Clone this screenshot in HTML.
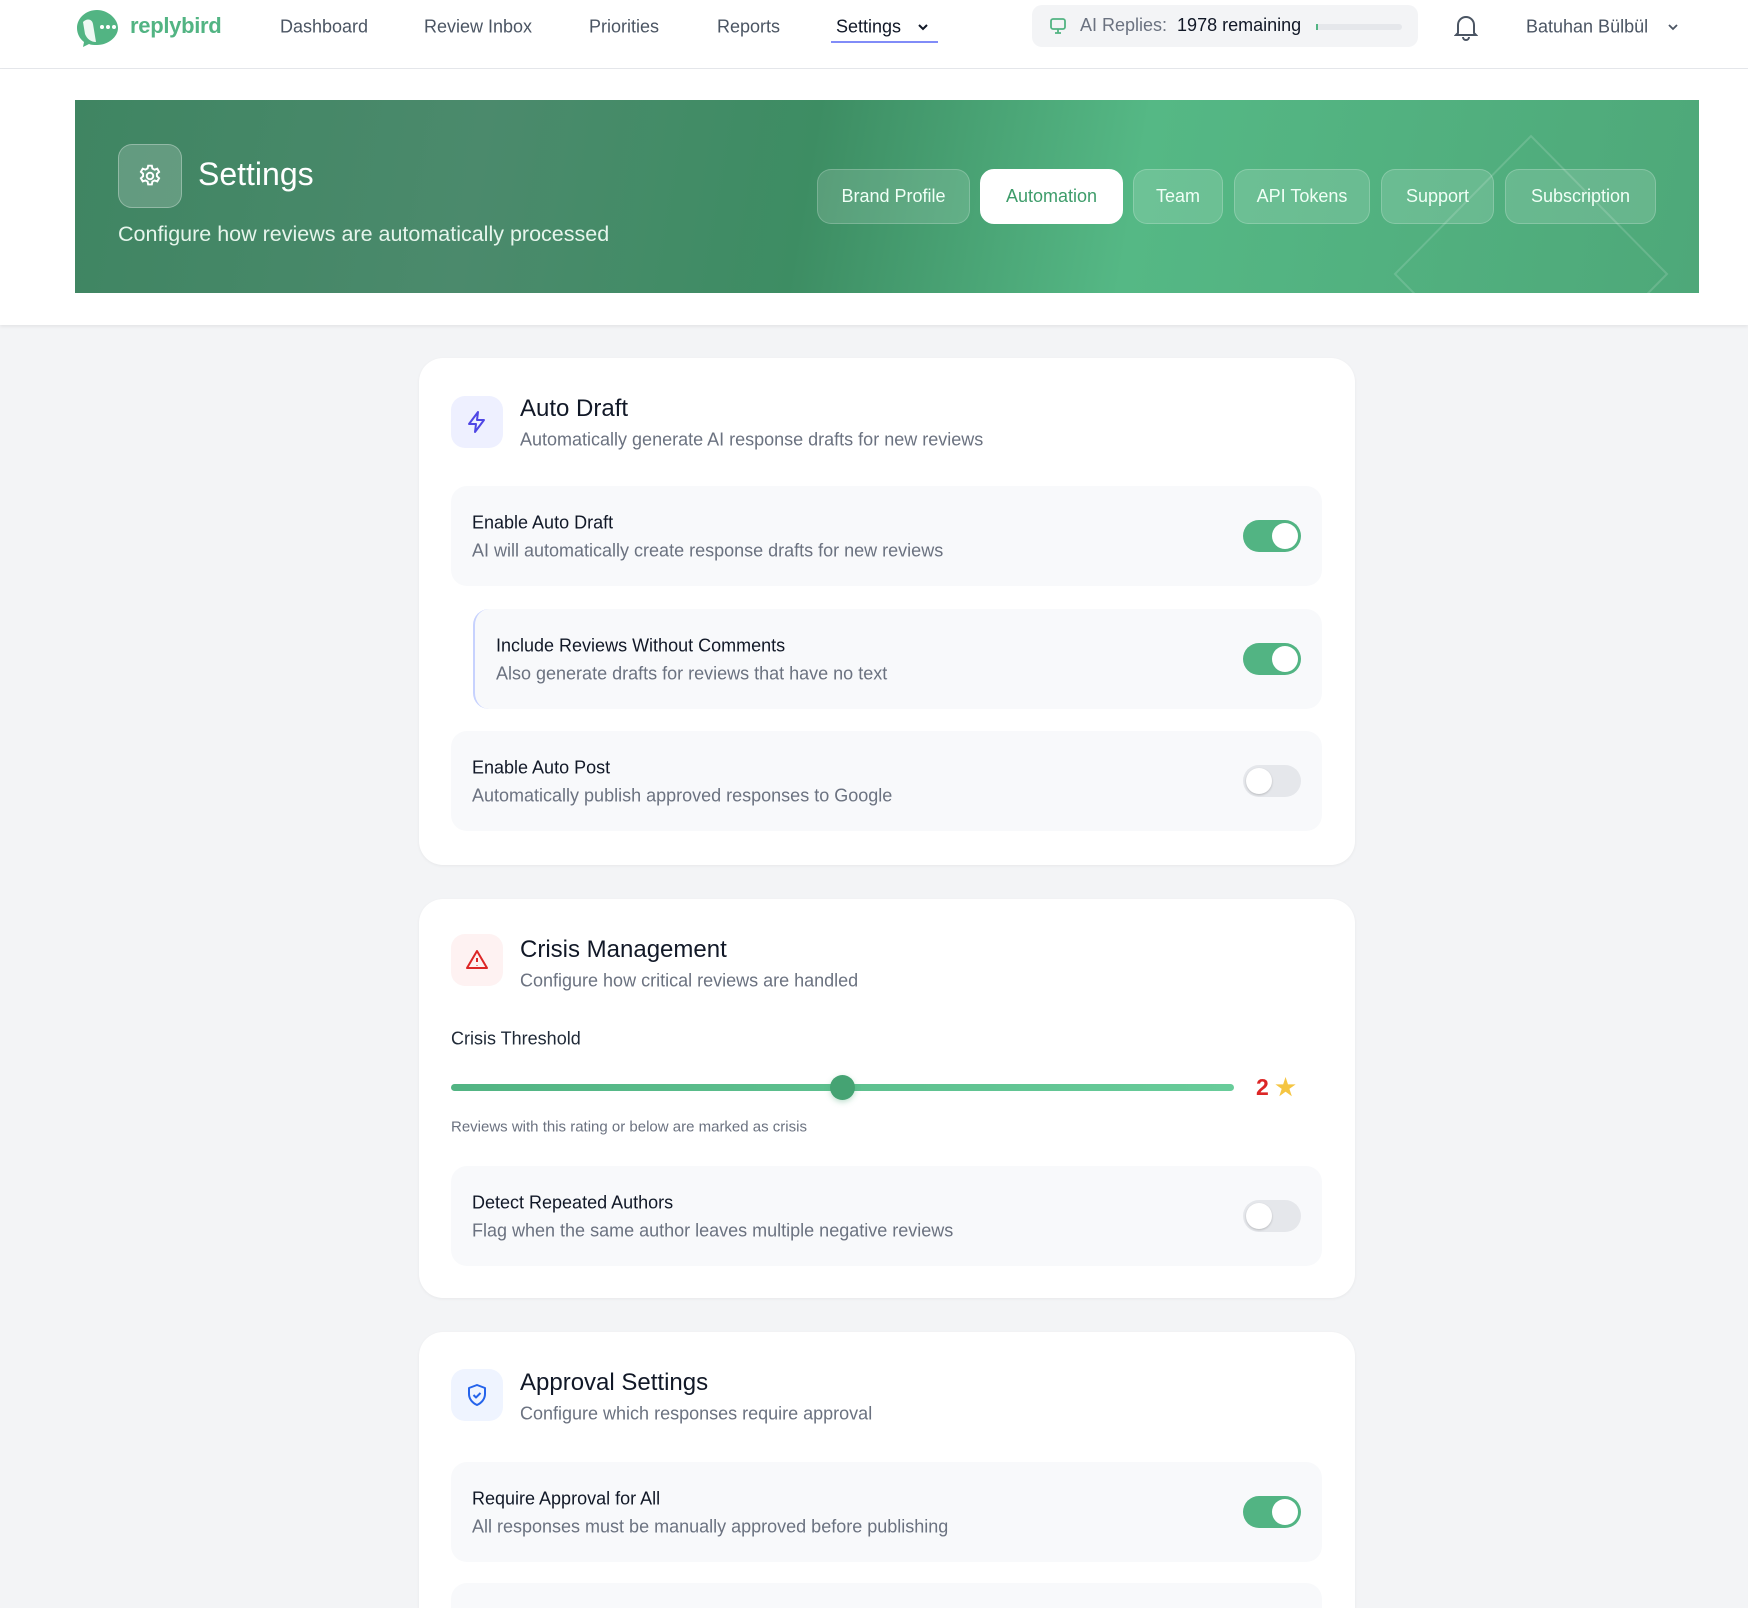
<!DOCTYPE html>
<html style="height:1608px;overflow:hidden"><head><meta charset="utf-8">
<style>
*{box-sizing:border-box;margin:0;padding:0}
body{width:1748px;height:1608px;overflow:hidden;background:#f3f4f6;font-family:"Liberation Sans",sans-serif;position:relative;color:#111827}
.a{position:absolute}
.nav{left:0;top:0;width:1748px;height:69px;background:#fff;border-bottom:1px solid #e5e7eb}
.ni{top:27px;transform:translateY(-50%);font-size:18px;color:#4b5563;white-space:nowrap}
.hero{left:0;top:69px;width:1748px;height:256px;background:#fff;box-shadow:0 2px 3px rgba(0,0,0,.06)}
.banner{left:75px;top:100px;width:1624px;height:193px;overflow:hidden;background:linear-gradient(100deg,#3f8562 0%,#4b8a6c 25%,#3d8d63 45%,#55b885 65%,#4ea879 100%)}
.tab{top:169px;height:55px;border-radius:14px;background:rgba(255,255,255,.14);border:1px solid rgba(255,255,255,.2);color:#f0fff6;font-size:18px;display:flex;align-items:center;justify-content:center}
.card{left:419px;width:936px;background:#fff;border-radius:24px;box-shadow:0 1px 3px rgba(0,0,0,.05)}
.ib{width:52px;height:52px;border-radius:14px;display:flex;align-items:center;justify-content:center}
.ct{font-size:24px;color:#111827;left:520px;transform:translateY(-50%);white-space:nowrap}
.cs{font-size:18px;color:#6b7280;left:520px;transform:translateY(-50%);white-space:nowrap}
.row{left:451px;width:871px;height:100px;background:#f8f9fb;border-radius:16px}
.rt{position:absolute;left:21px;top:37px;transform:translateY(-50%);font-size:18px;color:#111827;white-space:nowrap}
.rd{position:absolute;left:21px;top:65px;transform:translateY(-50%);font-size:18px;color:#6b7280;white-space:nowrap}
.tg{position:absolute;left:792px;top:34px;width:58px;height:32px;border-radius:16px;background:#52b483}
.tg::after{content:"";position:absolute;right:3px;top:3px;width:26px;height:26px;border-radius:50%;background:#fff}
.tg.off{background:#e5e7eb}
.tg.off::after{left:3px;right:auto;box-shadow:0 1px 2px rgba(0,0,0,.2)}
</style></head><body>
<div class="a nav"></div>
<svg class="a" style="left:75px;top:8px" width="46" height="40" viewBox="0 0 46 40"><path d="M22 2C11 2 2 10 2 20c0 6 3 11 7 14l-1 5 6-3c2 1 5 1 8 1 11 0 21-8 21-17S33 2 22 2z" fill="#52b483"/><path d="M8 14c4-4 9-3 10 2l3 18c-5 0-9-3-11-8z" fill="#fff" opacity=".9"/><circle cx="27" cy="19" r="2" fill="#fff"/><circle cx="33" cy="19" r="2" fill="#fff"/><circle cx="39" cy="19" r="2" fill="#fff"/></svg>
<div class="a" style="left:130px;top:13px;font-size:22px;font-weight:bold;color:#52b483;letter-spacing:-.3px">replybird</div>
<div class="a ni" style="left:280px">Dashboard</div>
<div class="a ni" style="left:424px">Review Inbox</div>
<div class="a ni" style="left:589px">Priorities</div>
<div class="a ni" style="left:717px">Reports</div>
<div class="a ni" style="left:836px;color:#111827">Settings</div>
<svg class="a" style="left:917px;top:23px" width="12" height="8" viewBox="0 0 12 8" fill="none" stroke="#111827" stroke-width="2"><path d="M2 2l4 4 4-4"/></svg>
<div class="a" style="left:831px;top:41px;width:107px;height:2px;background:#818cf8"></div>
<div class="a" style="left:1032px;top:5px;width:386px;height:42px;border-radius:10px;background:#f3f4f6"></div>
<svg class="a" style="left:1049px;top:17px" width="18" height="18" viewBox="0 0 18 18" fill="none" stroke="#52b483" stroke-width="1.8"><rect x="2" y="2" width="14" height="10" rx="2"/><path d="M6 16h6M9 12v4"/></svg>
<div class="a" style="left:1080px;top:15px;font-size:18px;color:#6b7280">AI Replies:&nbsp; <span style="color:#111827">1978 remaining</span></div>
<div class="a" style="left:1316px;top:24px;width:86px;height:6px;border-radius:3px;background:#e5e7eb"><div style="width:2px;height:6px;background:#52b483"></div></div>
<svg class="a" style="left:1454px;top:13px" width="24" height="28" viewBox="0 0 24 28" fill="none" stroke="#4b5563" stroke-width="2"><path d="M4 20V12a8 8 0 0116 0v8l2 2H2z"/><path d="M9 24a3 3 0 006 0"/></svg>
<div class="a ni" style="left:1526px">Batuhan Bülbül</div>
<svg class="a" style="left:1667px;top:23px" width="12" height="8" viewBox="0 0 12 8" fill="none" stroke="#4b5563" stroke-width="1.8"><path d="M2 2l4 4 4-4"/></svg>

<div class="a hero"></div>
<div class="a banner">
<svg class="a" style="left:1318px;top:34px" width="276" height="300"><path d="M2 140L138 2 274 140 138 278z" fill="none" stroke="rgba(255,255,255,.15)" stroke-width="2"/></svg>
</div>
<div class="a" style="left:118px;top:144px;width:64px;height:64px;border-radius:14px;background:rgba(255,255,255,.18);border:1px solid rgba(255,255,255,.3)"></div>
<svg class="a" style="left:137px;top:163px" width="26" height="26" viewBox="0 0 24 24" fill="none" stroke="#fff" stroke-width="1.8"><circle cx="12" cy="12" r="3"/><path d="M10.3 2.5h3.4l.5 2.6 2 1.1 2.5-.9 1.7 2.9-2 1.8v2.3l2 1.7-1.7 3-2.5-.9-2 1.1-.5 2.6h-3.4l-.5-2.6-2-1.1-2.5.9-1.7-3 2-1.7V9.9l-2-1.8 1.7-2.9 2.5.9 2-1.1z"/></svg>
<div class="a" style="left:198px;top:156px;font-size:32px;color:#fff">Settings</div>
<div class="a" style="left:118px;top:222px;font-size:21.5px;color:#e6f5ec">Configure how reviews are automatically processed</div>
<div class="a tab" style="left:817px;width:153px">Brand Profile</div>
<div class="a tab" style="left:980px;width:143px;background:#fff;color:#3d9c6a;border-color:#fff">Automation</div>
<div class="a tab" style="left:1133px;width:90px">Team</div>
<div class="a tab" style="left:1234px;width:136px">API Tokens</div>
<div class="a tab" style="left:1381px;width:113px">Support</div>
<div class="a tab" style="left:1505px;width:151px">Subscription</div>

<div class="a card" style="top:358px;height:507px"></div>
<div class="a ib" style="left:451px;top:396px;background:#eef0ff"><svg width="24" height="24" viewBox="0 0 24 24" fill="none" stroke="#4f46e5" stroke-width="2" stroke-linejoin="round"><path d="M13 2L4 14h7l-1 8 9-12h-7z"/></svg></div>
<div class="a ct" style="top:409px">Auto Draft</div>
<div class="a cs" style="top:440px">Automatically generate AI response drafts for new reviews</div>
<div class="a row" style="top:486px"><div class="rt">Enable Auto Draft</div><div class="rd">AI will automatically create response drafts for new reviews</div><div class="tg"></div></div>
<div class="a row" style="top:609px;left:473px;width:849px;border-left:2px solid #c7d2fe"><div class="rt">Include Reviews Without Comments</div><div class="rd">Also generate drafts for reviews that have no text</div><div class="tg" style="left:768px"></div></div>
<div class="a row" style="top:731px"><div class="rt">Enable Auto Post</div><div class="rd">Automatically publish approved responses to Google</div><div class="tg off"></div></div>

<div class="a card" style="top:899px;height:399px"></div>
<div class="a ib" style="left:451px;top:934px;background:#fef2f2"><svg width="24" height="24" viewBox="0 0 24 24" fill="none" stroke="#dc2626" stroke-width="2" stroke-linejoin="round"><path d="M12 3L2 20h20z"/><path d="M12 10v4M12 17v.5"/></svg></div>
<div class="a ct" style="top:950px">Crisis Management</div>
<div class="a cs" style="top:981px">Configure how critical reviews are handled</div>
<div class="a" style="left:451px;top:1039px;transform:translateY(-50%);font-size:18px;color:#1f2937">Crisis Threshold</div>
<div class="a" style="left:451px;top:1084px;width:783px;height:7px;border-radius:4px;background:linear-gradient(90deg,#52b483,#68cc9a)"></div>
<div class="a" style="left:830px;top:1075px;width:25px;height:25px;border-radius:50%;background:#45a373;box-shadow:0 2px 6px rgba(69,163,115,.35)"></div>
<div class="a" style="left:1256px;top:1074px;font-size:23px;font-weight:bold;color:#dc2626">2 <span style="color:#f5c542;font-size:23px">★</span></div>
<div class="a" style="left:451px;top:1127px;transform:translateY(-50%);font-size:15px;color:#6b7280">Reviews with this rating or below are marked as crisis</div>
<div class="a row" style="top:1166px"><div class="rt">Detect Repeated Authors</div><div class="rd">Flag when the same author leaves multiple negative reviews</div><div class="tg off"></div></div>

<div class="a card" style="top:1332px;height:276px;border-radius:24px 24px 0 0"></div>
<div class="a ib" style="left:451px;top:1369px;background:#eff4ff"><svg width="24" height="24" viewBox="0 0 24 24" fill="none" stroke="#2563eb" stroke-width="2" stroke-linejoin="round"><path d="M12 2l8 3v6c0 5-3.5 9-8 11-4.5-2-8-6-8-11V5z"/><path d="M8.5 12l2.5 2.5 4.5-4.5"/></svg></div>
<div class="a ct" style="top:1383px">Approval Settings</div>
<div class="a cs" style="top:1414px">Configure which responses require approval</div>
<div class="a row" style="top:1462px"><div class="rt">Require Approval for All</div><div class="rd">All responses must be manually approved before publishing</div><div class="tg"></div></div>
<div class="a row" style="top:1583px;height:25px;border-radius:16px 16px 0 0"></div>
</body></html>
